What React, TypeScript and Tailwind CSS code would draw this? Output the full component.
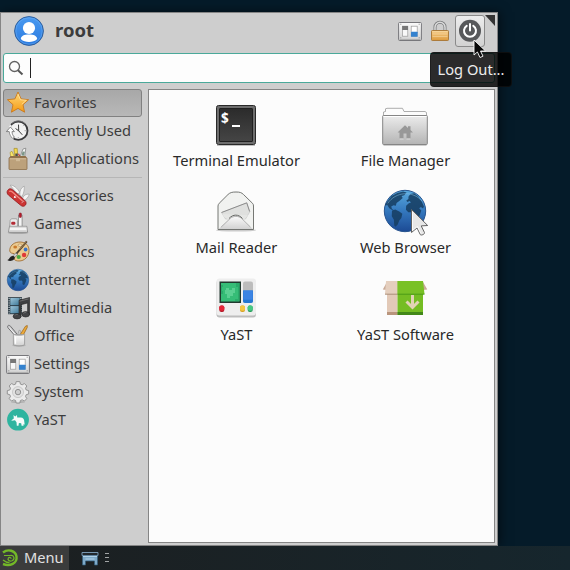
import React from "react";

type IconProps = { className?: string };

function Gradients() {
  return (
    <svg className="absolute size-0" aria-hidden="true">
      <defs>
        <linearGradient id="star" x1="0" y1="0" x2="0" y2="1">
          <stop offset="0" stopColor="#ffd97a" />
          <stop offset="1" stopColor="#f59a14" />
        </linearGradient>
        <linearGradient id="metal" x1="0" y1="0" x2="0" y2="1">
          <stop offset="0" stopColor="#fbfbfb" />
          <stop offset="1" stopColor="#d2d2d2" />
        </linearGradient>
        <linearGradient id="globe" x1="0" y1="0" x2="0" y2="1">
          <stop offset="0" stopColor="#5aaade" />
          <stop offset="0.5" stopColor="#3478be" />
          <stop offset="1" stopColor="#1c4a94" />
        </linearGradient>
        <linearGradient id="gold" x1="0" y1="0" x2="0" y2="1">
          <stop offset="0" stopColor="#f6cf8c" />
          <stop offset="1" stopColor="#dd9a3c" />
        </linearGradient>
        <linearGradient id="person" x1="0" y1="0" x2="0" y2="1">
          <stop offset="0" stopColor="#4a9af0" />
          <stop offset="1" stopColor="#2b7be0" />
        </linearGradient>
        <linearGradient id="term" x1="0" y1="0" x2="0" y2="1">
          <stop offset="0" stopColor="#2b2b2b" />
          <stop offset="1" stopColor="#454545" />
        </linearGradient>
        <linearGradient id="folder" x1="0" y1="0" x2="0" y2="1">
          <stop offset="0" stopColor="#ececec" />
          <stop offset="1" stopColor="#b4b4b4" />
        </linearGradient>
        <linearGradient id="film" x1="0" y1="0" x2="1" y2="1">
          <stop offset="0" stopColor="#9fc6da" />
          <stop offset="1" stopColor="#3b7796" />
        </linearGradient>
      </defs>
    </svg>
  );
}

function Globe({ className }: IconProps) {
  return (
    <svg viewBox="0 0 24 24" className={className}>
      <circle cx="12" cy="12" r="10.8" fill="url(#globe)" stroke="#24508c" strokeWidth="0.5" />
      <g fill="#173f63" fillOpacity="0.88">
        <path d="M3.2 6.5 5 4.2 8 2.6l3-.8 1.8.6-1.2 1.4-1.4.4.6 1-1.6 1.4-1.6 1.2-.4 1.4-1.2-.2-1.2.6.4 1.4 1.3.7-.8.1-1.9-1.2-1.2-2-.5.7-.6-.4z" />
        <path d="m5.2 11.9 1.7-.7 2.1 1 1.6 1.2-.5 2.2-1.1 1.4-.8 2-1.1 1.2-.7-.6-.2-3-1.1-1.9z" />
        <path d="m13.8 4.6 1-1.5 2-.3 2 1.5 1.9 2.7 1.2 2.6-.5 1.1-1.1-.8-.9.6 1.1 1.3-.8 2.3-1.3 2.6-1.4.3-.6-1.4.2-1.8-.9-1.2-2 .1-1.2-1.3.1-2.1 1.4-1.3 1.1-.4-.7-.8-1.2.5-.5-.8 1.1-.7z" />
      </g>
      <path d="M3 8c4-6 13-7 18-1" fill="none" stroke="#8cc6eb" strokeWidth="0.5" strokeOpacity="0.5" />
    </svg>
  );
}

function Switches({ className }: IconProps) {
  return (
    <svg viewBox="0 0 24 24" className={className}>
      <rect x="0.6" y="3.5" width="22.8" height="18" rx="1" fill="url(#metal)" stroke="#77777b" />
      <path d="M1.6 20.4h20.8" stroke="#aaa" />
      <rect x="4.4" y="7.2" width="5.4" height="10" fill="#f8f8f8" stroke="#999" strokeWidth="0.7" />
      <rect x="4.2" y="7" width="5.8" height="4" fill="#777" />
      <rect x="13.2" y="7.2" width="6" height="10" fill="#fff" stroke="#999" strokeWidth="0.7" />
      <rect x="13" y="12.8" width="6.6" height="5" rx="0.5" fill="#3482cf" />
      <path d="M2.3 5.2h1M20.7 5.2h1M2.3 18.8h1M20.7 18.8h1" stroke="#888" />
    </svg>
  );
}

function Star({ className }: IconProps) {
  return (
    <svg viewBox="0 0 24 24" className={className}>
      <path d="m12 1 3.100 6.900 7.500.8-5.600 5 1.600 7.500-6.600-3.800-6.600 3.800L7 13.700l-5.600-5 7.500-.8z" fill="url(#star)" stroke="#c9781c" strokeWidth="0.9" strokeLinejoin="round" />
      <path d="m12 3 2.400 5.700 5.900.6-4.500 4" fill="none" stroke="#ffe9ad" strokeWidth="0.7" />
    </svg>
  );
}

function History({ className }: IconProps) {
  return (
    <svg viewBox="0 0 24 24" className={className}>
      <circle cx="12.3" cy="11.7" r="9.200" fill="#f2f2f2" stroke="#3a3a3c" strokeWidth="1.800" />
      <path d="M7.500 19.500A9.200 9.200 0 0 1 5 6" fill="none" stroke="#ececec" strokeWidth="2.200" />
      <path d="M6.200 4.300C10 .8 15.500 1.200 19 4.500" fill="none" stroke="#8a8a8c" strokeWidth="0.700" />
      <path d="m.4 12.600 4-4.600 4 4.600H6c.1 2.200.9 4 2.400 5.600l-1.800 1.200c-2-1.800-3.200-4-3.400-6.800z" fill="#fdfdfd" stroke="#6c6c6c" strokeWidth="0.800" />
      <path d="m12.500 5.600.2 6.200 3.600 4M12.700 11.800l-3.200-2.300" fill="none" stroke="#3b3b3b" strokeWidth="1" />
      <path d="M18.500 11.700h1.500M12.3 18v1.3M16.900 7.100l.8-.8" stroke="#888" strokeWidth="0.7" />
    </svg>
  );
}

function Toolbox({ className }: IconProps) {
  return (
    <svg viewBox="0 0 24 24" className={className}>
      <path d="m14 10 3-8 2.8-.8-1.2 9z" fill="#f5f7f5" stroke="#777" strokeWidth="0.7" />
      <path d="m15.400 8.500 1.200-4 2.300.3-.8 4z" fill="#7c9687" />
      <path d="M8 1.4h3.2l.6 9H8.6z" fill="#f3d94d" stroke="#a58d26" strokeWidth="0.7" />
      <path d="m4 5.5 2-1.2 2.5 6H5z" fill="#fae76b" stroke="#a58d26" strokeWidth="0.6" />
      <path d="M9.3 6.5h2.4v4H9.3z" fill="#4a4c55" />
      <path d="m12.5 6.7 1.4 3" stroke="#c23a34" strokeWidth="1.2" />
      <path d="M3 11.3 4.4 9h15.2l1.4 2.3z" fill="#917048" />
      <rect x="3" y="10.7" width="18" height="11.800" rx="0.6" fill="#bca17b" stroke="#8b6d49" strokeWidth="0.8" />
      <path d="M4 11.8h16" stroke="#dfc9a7" strokeWidth="0.8" />
      <path d="M10 11.2h4v3h-4z" fill="#d1bb98" />
    </svg>
  );
}

function Knife({ className }: IconProps) {
  return (
    <svg viewBox="0 0 24 24" className={className}>
      <g fill="#f4f4f4" stroke="#999" strokeWidth="0.6">
        <path d="M4.2 1.2c3-.4 7 2.5 9.7 7.5l-2.4 1.3z" />
        <path d="M13.8 10.7c-.2-4 1.2-7 4.4-8.7.3 3-.2 7-2.2 10.7z" />
        <path d="M16.3 14.8c1.6-3.7 3.7-5 7-4.6-.8 3-2.6 5-5.7 6.7z" />
      </g>
      <path d="M1.600 6.400c1.200-2 3.400-2 5-.6l12.200 10.600c1.600 1.500 1.700 3.400.5 4.800s-3 1.500-4.600.1L2.600 11.200C1.100 9.900.6 8.200 1.600 6.400z" fill="#cc3433" stroke="#94191d" strokeWidth="0.8" />
      <path d="M3.200 7.500c.9-.7 1.800-.6 2.800.3l10.600 9.200" fill="none" stroke="#f28a81" strokeWidth="1.2" />
      <path d="m9.2 11.800-1 2.200m0-1.500 2 1.2" stroke="#fff" strokeWidth="0.9" />
      <path d="M15.500 19.200c.8-1.300 1.600-1.900 2.700-2" stroke="#eee" strokeWidth="0.6" fill="none" />
    </svg>
  );
}

function Joystick({ className }: IconProps) {
  return (
    <svg viewBox="0 0 24 24" className={className}>
      <ellipse cx="12" cy="20.8" rx="10.5" ry="1.2" fill="#777" fillOpacity="0.45" />
      <path d="m4.2 8.3 1.2-1.5h5.2l.8 1.5v6.9H3.7z" fill="#ececec" stroke="#888" strokeWidth="0.7" />
      <rect x="5.2" y="9.8" width="4.2" height="3" rx="1.3" fill="#b32b35" />
      <path d="M12.500 3h3.600v13h-3.600z" fill="#f5f5f5" stroke="#777" strokeWidth="0.7" />
      <rect x="13.200" y="1" width="2.200" height="4.500" rx="0.800" fill="#b71c2c" stroke="#7d1722" strokeWidth="0.5" />
      <path d="M3.500 14.3h17.3l.8 5.8H2.5z" fill="#f4f4f4" stroke="#858585" strokeWidth="0.8" />
      <path d="M4 15.2h16M3.4 18.6h17.4" stroke="#c9c9c9" strokeWidth="0.8" />
    </svg>
  );
}

function Palette({ className }: IconProps) {
  return (
    <svg viewBox="0 0 24 24" className={className}>
      <path d="M14 2c5.6 0 9.2 3.4 9 8.7-.2 5.8-4.3 10.3-10 10.3-4.6 0-5.9-2.3-4.5-4.4 1-1.7.3-3-1.5-3.2-2.5-.3-3.6-1.5-3.2-4C4.500 4.800 8.700 2 14 2z" fill="#ebca8f" stroke="#9a6526" strokeWidth="0.8" />
      <ellipse cx="9.2" cy="6.9" rx="1.9" ry="1.5" fill="#c97a2c" />
      <ellipse cx="14" cy="5.2" rx="2" ry="1.2" fill="#f6e5c1" stroke="#9c7038" strokeWidth="0.5" />
      <circle cx="12.7" cy="17" r="2.1" fill="#47a640" />
      <circle cx="18.1" cy="15" r="2.2" fill="#df3b38" />
      <circle cx="19.6" cy="9.5" r="1.9" fill="#3973c7" />
      <path d="M20.8 1.3 9.2 15.2" stroke="#4d3f30" strokeWidth="1.8" />
      <path d="M20.4 1.6 13.5 9.8" stroke="#b58a4a" strokeWidth="0.8" />
      <path d="m9.8 12.8 1.8 1.6-3.4 3.7-2-1.6z" fill="#ccc" stroke="#555" strokeWidth="0.5" />
      <path d="M7.600 16c1.500.8 1.600 2.200.5 3.200-1.700 1.700-4.500 2.400-6.900.8 2.800-.5 2.300-4.700 6.400-4z" fill="#222" />
    </svg>
  );
}

function Media({ className }: IconProps) {
  return (
    <svg viewBox="0 0 24 24" className={className}>
      <rect x="2" y="1.2" width="14" height="17" fill="#26353e" />
      <rect x="4.3" y="2" width="9.4" height="7.2" fill="url(#film)" />
      <rect x="4.3" y="10.1" width="9.4" height="7.2" fill="url(#film)" />
      <path d="M3.100 2v16M14.900 2v16" stroke="#e5edf0" strokeWidth="1" strokeDasharray="1.2 1" />
      <path d="m13 4.300 10.600-2.800v17h-2V7L15 8.700v12h-2z" fill="#3f4042" stroke="#222" strokeWidth="0.6" />
      <ellipse cx="11.1" cy="20.3" rx="4" ry="2.6" fill="#424345" stroke="#222" strokeWidth="0.6" />
      <ellipse cx="19.7" cy="18.3" rx="3.9" ry="2.700" fill="#424345" stroke="#222" strokeWidth="0.6" />
      <path d="m13.600 5.200 9-2.300M8.800 19.400c1-1 2-1 3-.8M17.300 17.400c1-.9 2-1 3-.7" fill="none" stroke="#8b8b8b" strokeWidth="0.6" />
    </svg>
  );
}

function Office({ className }: IconProps) {
  return (
    <svg viewBox="0 0 24 24" className={className}>
      <path d="M1.800 3.500c-.8-2 1.100-3 2.800-1.200l6.900 8.400-2 1.600z" fill="#c7c7c9" stroke="#6f6f70" strokeWidth="1" />
      <path d="m3.200 3.500 6 7" stroke="#fafafa" strokeWidth="0.9" />
      <path d="m14.200 10.400 5.300-8.200 1.800-.7-.1 2-4.200 8z" fill="#ebaa3b" stroke="#996214" strokeWidth="0.7" />
      <path d="m11.700 11 1.500-4.800 1.200.4-.5 4.700z" fill="#ddd" stroke="#777" strokeWidth="0.5" />
      <ellipse cx="13" cy="21.300" rx="6.800" ry="1.400" fill="#888" fillOpacity="0.4" />
      <path d="M7.400 10.500v9.800c0 2 11.200 2 11.200 0v-9.800z" fill="url(#metal)" stroke="#8b8b8b" strokeWidth="0.7" />
      <path d="M7.400 10.500c2 1.400 9.200 1.400 11.200 0" fill="none" stroke="#aaa" strokeWidth="0.8" />
      <path d="M9.500 12.500v7.300" stroke="#fff" strokeWidth="1.3" />
    </svg>
  );
}

function Gear({ className }: IconProps) {
  return (
    <svg viewBox="0 0 24 24" className={className}>
      <ellipse cx="12" cy="22" rx="7" ry="1.2" fill="#777" fillOpacity="0.35" />
      <path d="m10.200 1.600 3.600 0 .6 2.500 1.800.7 2.200-1.300 2.400 2.500-1.300 2.200.7 1.800 2.500.6v3.400l-2.500.7-.7 1.700 1.300 2.200-2.400 2.500-2.200-1.300-1.800.7-.6 2.500h-3.600l-.6-2.500-1.800-.7-2.200 1.300-2.400-2.500 1.300-2.200-.7-1.700L1.300 14v-3.400L3.800 10l.7-1.800L3.200 6l2.400-2.500 2.200 1.300 1.800-.7z" fill="#ebebeb" stroke="#8c8c8c" strokeWidth="0.9" strokeLinejoin="round" />
      <circle cx="12" cy="12.100" r="5.500" fill="#e3e3e3" stroke="#bcbcbc" strokeWidth="0.700" />
      <circle cx="12" cy="12.100" r="2.700" fill="#cecece" stroke="#888" strokeWidth="0.9" />
    </svg>
  );
}

function Aardvark({ className }: IconProps) {
  return (
    <svg viewBox="0 0 24 24" className={className}>
      <circle cx="12" cy="11.700" r="10.900" fill="#2eb49f" />
      <path d="m5.500 12.200 2.300-1.700L7.500 7l1.700 1.600L11 7l.2 2.400 3.400.1c2.600.1 3.700 1.700 3.700 4.200l.4 3.100-1.100-.9-.1 1.900h-1.900l-.4-2.600-2.300-.2-.4 2.800h-1.700l-.3-3.600-1.500-2-3.300.5z" fill="#f5fbfa" />
    </svg>
  );
}

function Avatar() {
  return (
    <svg viewBox="0 0 30 30" className="size-[30px]">
      <circle cx="15" cy="15" r="14.4" fill="url(#person)" stroke="#315f9a" />
      <circle cx="15" cy="15" r="13.2" fill="none" stroke="#79b7f5" strokeWidth="0.7" strokeOpacity="0.6" />
      <circle cx="15" cy="12" r="6.100" fill="#fff" />
      <path d="M6.800 23c.4-3 3.200-4.400 8.200-4.400s7.800 1.400 8.200 4.400c-2.200 2.200-5 3-8.200 3s-6-.8-8.200-3z" fill="#fff" />
    </svg>
  );
}

function Lock() {
  return (
    <svg viewBox="0 0 24 24" className="size-6">
      <path d="M7 13V8.200a5 5 0 0 1 10 0V13" fill="none" stroke="#77797a" strokeWidth="3" />
      <path d="M7 13V8.200a5 5 0 0 1 10 0V13" fill="none" stroke="#dadada" strokeWidth="1.500" />
      <rect x="3.500" y="11.500" width="17" height="10" rx="0.8" fill="url(#gold)" stroke="#a77532" strokeWidth="0.900" />
      <path d="M4.500 12.600h15M4.500 15h15M4.500 17.500h15" stroke="#f9dfb1" strokeWidth="0.500" />
    </svg>
  );
}

function Power() {
  return (
    <svg viewBox="0 0 24 24" className="size-6">
      <circle cx="12" cy="11.700" r="11" fill="#57585a" />
      <path d="M8.700 6.800a6 6 0 1 0 6.600 0" fill="none" stroke="#fff" strokeWidth="2" strokeLinecap="round" />
      <path d="M12 4.900v6.500" stroke="#fff" strokeWidth="2" strokeLinecap="round" />
    </svg>
  );
}

function Terminal() {
  return (
    <svg viewBox="0 0 40 40" className="size-10 overflow-visible">
      <path d="M1 40.500h38" stroke="#999" strokeOpacity="0.6" />
      <rect x="0.500" y="0.500" width="39" height="39" rx="2" fill="#6e6e6e" stroke="#292929" />
      <rect x="3.500" y="3.500" width="33" height="33" rx="0.500" fill="url(#term)" stroke="#202020" />
      <text x="5" y="17.500" fill="#fff" fontSize="13.500" fontWeight="700" fontFamily="'Noto Sans', sans-serif">$</text>
      <path d="M16 21h8" stroke="#fff" strokeWidth="2" />
    </svg>
  );
}

function Folder() {
  return (
    <svg viewBox="0 0 46 40" className="h-10 w-[46px] overflow-visible">
      <path d="M1.500 40.300h43" stroke="#888" strokeOpacity="0.5" />
      <path d="M1.500 12V7l2-.5V3.800L5 3.300h15.500L22 6.500h21l1.500 1V12z" fill="#fcfcfc" stroke="#999" strokeWidth="0.8" />
      <rect x="0.700" y="10.500" width="44.600" height="29" rx="0.800" fill="url(#folder)" stroke="#858585" />
      <path d="M1.500 11.500h43" stroke="#fff" />
      <path d="m15.500 27.500 7.500-7.300 3 2.700v-1.600h2.500V25l2.500 2.500h-2.500v6h-4v-5h-3v5h-4v-6z" fill="#989898" />
      <path d="M17.600 34h3.900m3 0h3.900" stroke="#e4e4e4" strokeWidth="0.800" />
    </svg>
  );
}

function Mail() {
  return (
    <svg viewBox="0 0 40 40" className="-mt-[3px] size-10 overflow-visible">
      <ellipse cx="20" cy="39.200" rx="20" ry="1.400" fill="#999" fillOpacity="0.5" />
      <path d="M2 38.500V15c0-1 .5-2 1.200-2.700L12 3.500C14 1.600 16 1 20 1s5.500.6 7.500 2.500l9 8.800c.8.800 1 1.500 1 2.700v23.500z" fill="#f1f2f0" stroke="#666965" strokeWidth="0.900" />
      <path d="m5.500 21.500 25-9.500 3.500 8.500-4.500 7.500h-20z" fill="#dfe0de" stroke="#bbb" strokeWidth="0.500" />
      <path d="m5.500 21.500 25.300-9.700 2.800 8.700" fill="none" stroke="#777" strokeWidth="0.800" />
      <path d="m6.500 23 1.500 3 4 2.200h16.500l3.500-4" fill="#e5e6e4" />
      <path d="m2.500 38 11.500-10.800c3-2.800 8-2.800 11 0L37 38z" fill="url(#metal)" />
      <path d="m5.200 36 9-8.500c3-2.800 8.500-2.800 11.500 0l8.700 8.500" fill="none" stroke="#969796" strokeWidth="0.700" />
      <path d="M13 27.500c4-4.500 9.500-4.500 13.500 0" fill="none" stroke="#676966" />
    </svg>
  );
}

function Browser() {
  return (
    <div className="relative -mt-0.5 size-11">
      <Globe className="-mt-px -ml-px size-[46px]" />
      <svg viewBox="0 0 22 30" className="absolute top-[18px] left-[26px] h-[30px] w-[22px] overflow-visible">
        <path d="M2.500 2.500v23l5.500-4.600 3.300 6.700c.8 1.200 4.800-.5 4.200-2l-3.300-6.700 6.500-.4z" fill="#e7e7e7" stroke="#626262" />
        <path d="M3.500 5v18.500l4.900-4 3.500 7" fill="none" stroke="#fff" strokeWidth="0.800" />
      </svg>
    </div>
  );
}

function ControlPanel() {
  return (
    <svg viewBox="0 0 40 40" className="-mt-0.5 size-10">
      <rect x="0.500" y="2" width="39.500" height="37.500" rx="3" fill="#bdbdbd" />
      <rect x="0.500" y="0.500" width="39.500" height="37" rx="3" fill="#eee" />
      <rect x="3.500" y="3.500" width="21.500" height="21.500" fill="#21392f" />
      <rect x="5" y="5" width="18.500" height="18.500" fill="#36bd77" />
      <path d="M5 7h2v2H6v4h1v3H5zm15-2h3.500v18H19v-2h3V9h-2z" fill="#2bab6b" />
      <path d="M10 10h3v2h3v-2h3v5h-2v3h-3v2h-3v-4h-2v-4h1z" fill="#5ad092" />
      <rect x="27" y="3.500" width="10" height="21.500" rx="2" fill="#bcbcbc" />
      <path d="M27 12.500h10V23c0 1-.6 2-2 2h-6c-1.400 0-2-1-2-2z" fill="#2577d2" />
      <path d="M27.300 12.500h9.400v9.200h-9.400z" fill="#3c84e4" />
      <g>
        <rect x="3.300" y="27.500" width="5" height="6.500" rx="2" fill="#b11b2a" />
        <rect x="3.300" y="27.500" width="5" height="5.300" rx="1.800" fill="#e32637" />
        <rect x="24" y="27.500" width="5" height="6.500" rx="2" fill="#d6a124" />
        <rect x="24" y="27.500" width="5" height="5.300" rx="1.800" fill="#f5c641" />
        <rect x="31.700" y="27.500" width="5" height="6.500" rx="2" fill="#279b5a" />
        <rect x="31.700" y="27.500" width="5" height="5.300" rx="1.800" fill="#47c983" />
      </g>
    </svg>
  );
}

function Package() {
  return (
    <svg viewBox="0 0 46 40" className="-mt-0.5 h-10 w-[46px]">
      <path d="M5 4 0.800 11.500l4.200.5M41 4l4.300 7.500-4.300.5" fill="#c9ab98" />
      <path d="M5 3h10.500v34H5z" fill="#e2c9b7" />
      <path d="M15.500 3H41v34H15.500z" fill="#75bd23" />
      <path d="M4 3h11.500v13H3z" fill="#e5cfbe" />
      <path d="M15.500 3H41l1.500 13h-27z" fill="#79c126" />
      <path d="M3 16.200h12.500" stroke="#ac8e79" />
      <path d="M15.500 16.200h27" stroke="#4a9a17" />
      <path d="M5 35.500h10.500" stroke="#b9957d" strokeWidth="3" />
      <path d="M15.500 35.500H41" stroke="#438819" strokeWidth="3" />
      <path d="M30.500 17v12M24.500 23.500l6 6 6-6" fill="none" stroke="#e2d3b5" strokeWidth="3" />
    </svg>
  );
}

type Category = { name: string; Icon: (props: IconProps) => React.ReactElement };

const shortcuts: Category[] = [
  { name: "Favorites", Icon: Star },
  { name: "Recently Used", Icon: History },
  { name: "All Applications", Icon: Toolbox },
];

const categories: Category[] = [
  { name: "Accessories", Icon: Knife },
  { name: "Games", Icon: Joystick },
  { name: "Graphics", Icon: Palette },
  { name: "Internet", Icon: Globe },
  { name: "Multimedia", Icon: Media },
  { name: "Office", Icon: Office },
  { name: "Settings", Icon: Switches },
  { name: "System", Icon: Gear },
  { name: "YaST", Icon: Aardvark },
];

const applications = [
  { name: "Terminal Emulator", icon: <Terminal /> },
  { name: "File Manager", icon: <Folder /> },
  { name: "Mail Reader", icon: <Mail /> },
  { name: "Web Browser", icon: <Browser /> },
  { name: "YaST", icon: <ControlPanel /> },
  { name: "YaST Software", icon: <Package /> },
];

function CategoryRow({ name, Icon, selected = false }: Category & { selected?: boolean }) {
  return (
    <button
      className={
        selected
          ? "flex h-7 w-full items-center gap-1 rounded-[3px] border border-[#818181] bg-linear-to-b from-[#a8a8a8] to-[#b8b8b8] pl-0.5 text-left"
          : "flex h-7 w-full items-center gap-1 border border-transparent pl-0.5 text-left"
      }
    >
      <Icon className="size-6 shrink-0" />
      <span className="pb-0.5 whitespace-nowrap">{name}</span>
    </button>
  );
}

export default function App() {
  return (
    <div className="relative flex h-[570px] w-[570px] flex-col overflow-hidden bg-[#051b29] pt-3 font-['Noto_Sans',sans-serif] text-[14.67px] leading-5 text-[#3c3c3c]">
      <Gradients />
      <main className="flex h-[534px] w-[498px] flex-col border border-[#858585] bg-[#cecece] px-0.5 shadow-[2px_0_10px_rgba(0,0,0,0.5)]">
        <header className="flex h-10 items-start">
          <div className="flex items-center gap-[11px] pt-[3px] pl-[11px]">
            <Avatar />
            <h1 className="pb-0.5 text-[18.5px] font-bold">root</h1>
          </div>
          <div className="ml-auto flex items-center pt-0.5 pr-[10px]">
            <Switches className="mr-[6px] size-6" />
            <Lock />
            <button className="ml-[3px] flex h-8 w-[30px] items-center justify-center rounded-[3px] border border-[#8a8a8a] bg-linear-to-b from-[#ededed] to-[#d2d2d2]">
              <Power />
            </button>
          </div>
        </header>
        <div className="flex h-[30px] shrink-0 items-center rounded-[3px] border border-[#4aa99a] bg-[#fdfdfd] pl-1">
          <svg viewBox="0 0 16 16" className="size-4">
            <circle cx="6.500" cy="6.500" r="5" fill="none" stroke="#626262" strokeWidth="1.300" />
            <path d="m10 10.200 4.500 4.300" stroke="#555" strokeWidth="2" />
          </svg>
          <span className="ml-1.5 h-5 w-px bg-[#222]" />
        </div>
        <div className="mt-1.5 flex h-[454px] justify-between">
          <nav className="w-[139px]">
            {shortcuts.map((item) => (
              <CategoryRow key={item.name} {...item} selected={item.name === "Favorites"} />
            ))}
            <hr className="mt-1 mb-1 border-[#b6b6b6]" />
            {categories.map((item) => (
              <CategoryRow key={item.name} {...item} />
            ))}
          </nav>
          <section className="w-[347px] border border-[#858585] bg-[#fcfcfc] pt-3 pl-[3px] text-[#292929]">
            <div className="grid grid-cols-[169px_169px]">
              {applications.map(({ name, icon }) => (
                <div key={name} className="flex h-[87px] flex-col items-center">
                  <div className="flex h-12 items-center pr-px pb-0.5">{icon}</div>
                  <span className="whitespace-nowrap">{name}</span>
                </div>
              ))}
            </div>
          </section>
        </div>
      </main>
      <footer className="flex h-6 bg-linear-to-r from-[#1c1f20] to-[#16262d] text-[#e1e1e1]">
        <button className="flex w-[69px] items-center bg-[#3b3c3c]">
          <svg viewBox="0 0 20 20" className="size-5 shrink-0">
            <path d="M3 4.500C8 .5 15.500 2.500 16.500 8.500c1 7-6.500 10-13.500 7.500" fill="none" stroke="#73b828" strokeWidth="2.400" />
            <path d="M4 7.500h6c4-1 5.500 3.500 2 5.200-2.500 1-5-.8-3.600-2.700 1-1.200 2.800-.5 2.700.8M3 12c2 1.800 4 2.600 6.500 2.600" fill="none" stroke="#73b828" strokeWidth="1.200" />
          </svg>
          <span className="ml-1 pb-0.5">Menu</span>
        </button>
        <svg viewBox="0 0 18 16" className="mt-[5px] ml-3 h-4 w-[18px]">
          <path d="M1 1.500h16v3H1z" fill="#22282c" stroke="#7796b0" />
          <path d="M1.500 5h15v9h-3v-4h-9v4h-3z" fill="#7ea9c8" stroke="#345e7b" strokeWidth="0.700" />
          <path d="M2 5.500h14M4.500 8h9" stroke="#b0d2e7" />
        </svg>
        <div className="mt-[7px] ml-[6px] flex w-1 flex-col gap-[3px]">
          <i className="h-px bg-[#a2a5a6]" />
          <i className="h-px bg-[#a2a5a6]" />
          <i className="h-px bg-[#a2a5a6]" />
        </div>
      </footer>
      <svg viewBox="0 0 10 11" className="absolute top-[15px] left-[485px] h-[11px] w-2.5">
        <path d="M0 0h10v11z" fill="#343434" />
      </svg>
      <div className="absolute top-[52px] left-[430px] flex h-[35px] w-[82px] items-center justify-center rounded-[4px] border border-[#151515]/60 bg-black/83 pb-0.5 text-[#ededed]">
        Log Out...
      </div>
      <svg viewBox="0 0 14 20" className="absolute top-[39px] left-[473px] h-5 w-3.5">
        <path d="M1 1v15l3.400-3 2.600 5.500 3-1.300L7.500 12h5z" fill="#090909" stroke="#fff" strokeWidth="0.900" />
      </svg>
    </div>
  );
}
